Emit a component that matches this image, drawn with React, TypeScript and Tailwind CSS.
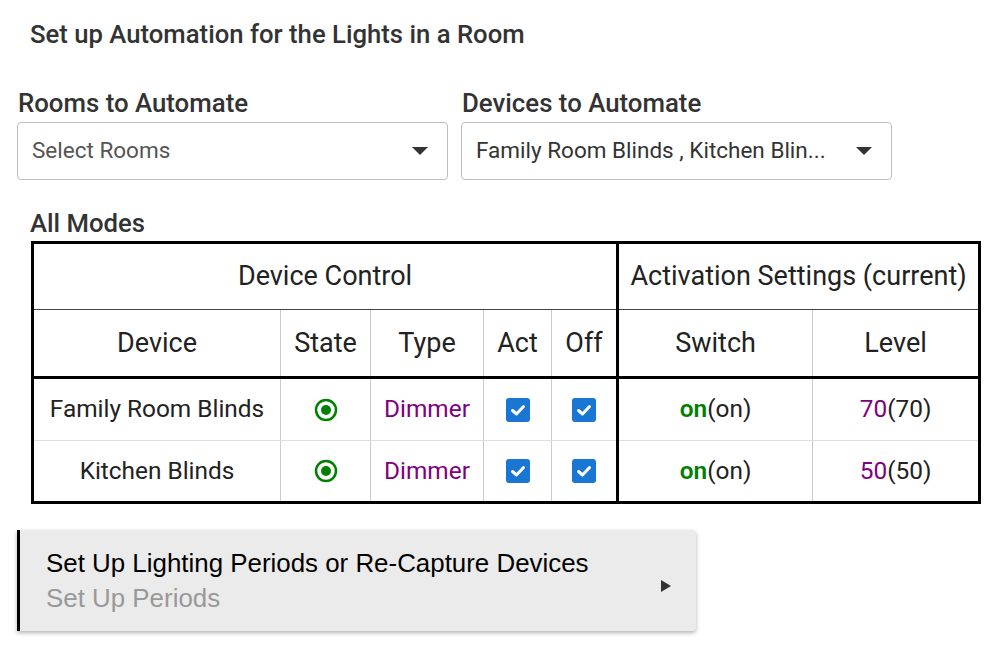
import React from 'react';

const rows = [
  { device: 'Family Room Blinds', type: 'Dimmer', sw: 'on', swCur: 'on', level: '70', levelCur: '70' },
  { device: 'Kitchen Blinds', type: 'Dimmer', sw: 'on', swCur: 'on', level: '50', levelCur: '50' },
];

const Caret = () => (
  <svg width="18" height="10" viewBox="0 0 18 10" className="shrink-0">
    <path d="M1 1 L17 1 L9 9 Z" fill="#333" />
  </svg>
);

const Radio = () => (
  <svg width="24" height="24" viewBox="0 0 24 24" className="mx-auto block">
    <circle cx="12" cy="12" r="10" fill="none" stroke="#008000" strokeWidth="2.5" />
    <circle cx="12" cy="12" r="5" fill="#008000" />
  </svg>
);

const Check = () => (
  <svg width="24" height="24" viewBox="0 0 24 24" className="mx-auto block">
    <rect x="0" y="0" width="24" height="24" rx="3" fill="#1976d2" />
    <path d="M6.5 12.5 L10.5 16 L17.5 8.5" fill="none" stroke="#fff" strokeWidth="3" strokeLinecap="round" strokeLinejoin="round" />
  </svg>
);

const SelectBox = ({ text, muted }: { text: string; muted?: boolean }) => (
  <div className="flex h-[58px] w-[431px] items-center justify-between rounded border border-[#bdbdbd] bg-white pl-[14px] pr-[18px]">
    <span className={`truncate text-[22.5px] ${muted ? 'text-[#555]' : 'text-[#333]'}`}>{text}</span>
    <Caret />
  </div>
);

export default function App() {
  return (
    <div className="min-h-[645px] bg-white font-['Roboto',sans-serif] text-[#222]">
      <h1 className="pl-[30px] pt-[19px] text-[25.7px] font-medium leading-[30px] text-[#333]">
        Set up Automation for the Lights in a Room
      </h1>

      <div className="mt-[40px] flex gap-[13px] pl-[17px]">
        <div>
          <div className="pl-px text-[25.8px] font-medium leading-[28px] text-[#333]">Rooms to Automate</div>
          <div className="mt-[5px]">
            <SelectBox text="Select Rooms" muted />
          </div>
        </div>
        <div>
          <div className="pl-px text-[25.8px] font-medium leading-[28px] text-[#333]">Devices to Automate</div>
          <div className="mt-[5px]">
            <SelectBox text="Family Room Blinds , Kitchen Blin..." />
          </div>
        </div>
      </div>

      <div className="mt-[28px] pl-[30px] text-[25.7px] font-medium leading-[30px] text-[#333]">All Modes</div>

      <table className="ml-[31px] mt-[3px] w-[947px] table-fixed border-collapse border-[3px] border-black text-center">
        <colgroup>
          <col className="w-[248px]" />
          <col className="w-[90px]" />
          <col className="w-[113px]" />
          <col className="w-[68px]" />
          <col className="w-[66px]" />
          <col className="w-[195px]" />
          <col className="w-[167px]" />
        </colgroup>
        <thead>
          <tr className="h-[67px] text-[27px] text-[#222]">
            <th colSpan={5} className="border-b border-[#444] font-normal">Device Control</th>
            <th colSpan={2} className="whitespace-nowrap border-b border-l-[3px] border-b-[#444] border-l-black font-normal">
              Activation Settings (current)
            </th>
          </tr>
          <tr className="h-[68px] text-[27px] text-[#222]">
            <th className="border-r border-[#ccc] font-normal">Device</th>
            <th className="border-r border-[#ccc] font-normal">State</th>
            <th className="border-r border-[#ccc] font-normal">Type</th>
            <th className="border-r border-[#ccc] font-normal">Act</th>
            <th className="font-normal">Off</th>
            <th className="border-l-[3px] border-r border-l-black border-r-[#ccc] font-normal">Switch</th>
            <th className="font-normal">Level</th>
          </tr>
        </thead>
        <tbody className="border-t-[3px] border-black">
          {rows.map((r, i) => (
            <tr key={i} className={`text-[24.4px] ${i === 0 ? 'h-[63px]' : 'h-[62px]'}`}>
              <td className={`border-r border-[#ccc] ${i === 0 ? 'border-b border-b-[#ddd]' : ''}`}>{r.device}</td>
              <td className={`border-r border-[#ccc] ${i === 0 ? 'border-b border-b-[#ddd]' : ''}`}>
                <Radio />
              </td>
              <td className={`border-r border-[#ccc] text-[#800080] ${i === 0 ? 'border-b border-b-[#ddd]' : ''}`}>{r.type}</td>
              <td className={`border-r border-[#ccc] ${i === 0 ? 'border-b border-b-[#ddd]' : ''}`}>
                <Check />
              </td>
              <td className={i === 0 ? 'border-b border-b-[#ddd]' : ''}>
                <Check />
              </td>
              <td className={`border-l-[3px] border-r border-l-black border-r-[#ccc] ${i === 0 ? 'border-b border-b-[#ddd]' : ''}`}>
                <span className="font-semibold text-[#008000]">{r.sw}</span>({r.swCur})
              </td>
              <td className={i === 0 ? 'border-b border-b-[#ddd]' : ''}>
                <span className="text-[#800080]">{r.level}</span>({r.levelCur})
              </td>
            </tr>
          ))}
        </tbody>
      </table>

      <div className="ml-[17px] mt-[26px] flex h-[101px] w-[679px] items-center justify-between rounded-r border-l-[3px] border-black bg-[#ebebeb] pl-[26px] pr-[24px] font-['Liberation_Sans',Arial,sans-serif] shadow-[0_2px_4px_rgba(0,0,0,0.3)]">
        <div>
          <div className="text-[25.9px] leading-[35px] text-black">Set Up Lighting Periods or Re-Capture Devices</div>
          <div className="text-[25.9px] leading-[35px] text-[#999]">Set Up Periods</div>
        </div>
        <svg width="12" height="14" viewBox="0 0 12 14" className="mt-[10px]">
          <path d="M1 1 L11 7 L1 13 Z" fill="#333" />
        </svg>
      </div>
    </div>
  );
}
